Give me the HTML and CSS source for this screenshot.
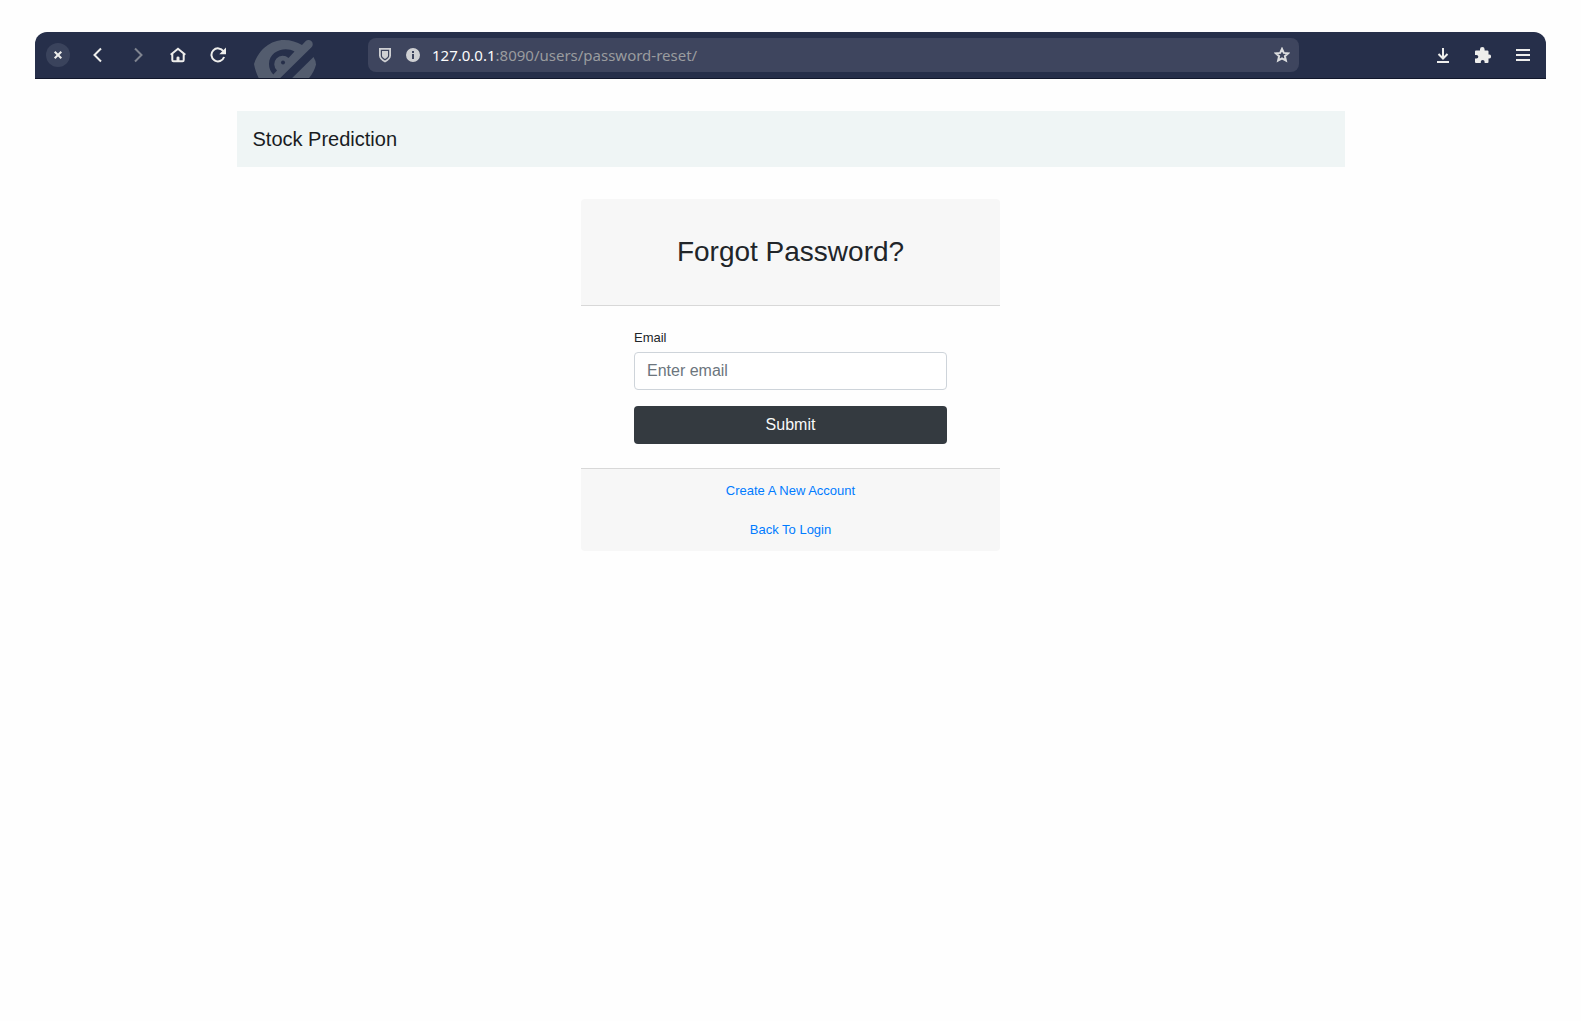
FILE: index.html
```html
<!DOCTYPE html>
<html lang="en">
<head>
<meta charset="utf-8">
<meta name="viewport" content="width=device-width, initial-scale=1">
<title>Forgot Password</title>
<link rel="stylesheet" href="styles.css">
</head>
<body>
<header class="toolbar">
  <div class="tools">
    <button class="tool" type="button" aria-label="Close"><svg class="close" width="24" height="24" viewBox="0 0 24 24"><path d="M8.7 8.7l6.6 6.6M15.3 8.7l-6.6 6.6"/></svg></button>
    <button class="tool" type="button" aria-label="Back"><svg width="16" height="16" viewBox="0 0 16 16"><path d="M11 1.5L4.5 8l6.500 6.500"/></svg></button>
    <button class="tool" type="button" aria-label="Forward" disabled><svg width="16" height="16" viewBox="0 0 16 16"><path d="M5 1.500L11.500 8 5 14.500"/></svg></button>
    <button class="tool" type="button" aria-label="Home"><svg width="16" height="16" viewBox="0 0 16 16"><path d="M.7 7.700L8 1.700l7.300 6M2.300 7v6q0 1.200 1.200 1.200h9q1.200 0 1.200-1.200V7"/><path class="fill" d="M6.500 14v-3.200q0-1.300 1.500-1.300t1.500 1.300V14z"/></svg></button>
    <button class="tool" type="button" aria-label="Reload"><svg width="16" height="16" viewBox="0 0 16 16"><path d="M13.400 4.300A6.500 6.500 0 1 0 14.100 10"/><path class="fill" d="M16 .5v6.700H9.300z"/></svg></button>
  </div>
  <div class="emblem">
    <svg width="63" height="54" viewBox="0 0 63 54" aria-hidden="true">
      <path class="shade" fill-rule="evenodd" d="M0 24C5 9 17 0 30 0c7 0 13 2 18 5l3.500-3.700a4.200 4.200 0 0 1 6 6L14 50C7 44 2 35 0 24zM40.500 11.500C31 6 15 11 15 24c0 4 1.500 8 4.300 10.500l3.700-4A7.500 7.500 0 1 1 34.500 18z"/>
      <path class="shade" d="M59.500 17q2.500 4 2.500 7.500C58 40 44 51 24 52z"/>
      <circle class="pupil" cx="29" cy="22.500" r="2"/>
    </svg>
  </div>
  <div class="address">
    <svg width="14" height="16" viewBox="0 0 14 16" aria-hidden="true"><path class="solid" fill-rule="evenodd" d="M1 1h12v7.500c0 3-2.300 5-6 6.900C3.300 13.500 1 11.500 1 8.500zm1.800 1.800v5.700c0 2 1.300 3.300 4.200 4.900 2.900-1.600 4.200-2.900 4.200-4.900V2.800zM4 4h6v4.500c0 1.300-.9 2.200-3 3.500-2.100-1.300-3-2.200-3-3.500z"/></svg>
    <svg width="14" height="14" viewBox="0 0 14 14" aria-hidden="true"><path class="solid" fill-rule="evenodd" d="M7 0a7 7 0 1 1 0 14A7 7 0 0 1 7 0zM6 3v2h2V3zM6 6v5h2V6z"/></svg>
    <span class="url"><span class="host">127.0.0.1</span>:8090/users/password-reset/</span>
    <button class="star" type="button" aria-label="Bookmark this page"><svg width="16" height="16" viewBox="0 0 16 16"><path d="M8 1.900l1.800 4 4.400.4-3.300 2.900 1 4.300L8 11.300l-3.900 2.200 1-4.300-3.300-2.900 4.400-.4z"/></svg></button>
  </div>
  <div class="tools">
    <button class="tool" type="button" aria-label="Downloads"><svg width="16" height="16" viewBox="0 0 16 16"><path d="M8 1v10M3.500 7L8 11.500 12.500 7M2 15h12"/></svg></button>
    <button class="tool" type="button" aria-label="Extensions"><svg width="16" height="16" viewBox="0 0 16 16"><path class="fill" d="M5 2.300a2.300 2.300 0 0 1 4.600 0V3.500h2.900q1 0 1 1V7.500h.6a2 2 0 0 1 0 4h-.6v3.500q0 1-1 1H9.600v-1.200a1.900 1.900 0 0 0-3.800 0V16H1q-1 0-1-1v-3.400h1.500a1.800 1.800 0 0 0 0-3.600H0V4.500q0-1 1-1h4z"/></svg></button>
    <button class="tool" type="button" aria-label="Menu"><svg width="16" height="16" viewBox="0 0 16 16"><path d="M1 3h14M1 8h14M1 13h14"/></svg></button>
  </div>
</header>
<div class="page">
  <nav class="navbar"><a class="brand" href="#">Stock Prediction</a></nav>
  <main class="card">
    <div class="card-header"><h1 class="title">Forgot Password?</h1></div>
    <form class="card-body">
      <label class="label" for="email">Email</label>
      <input class="field" id="email" type="email" placeholder="Enter email">
      <button class="submit" type="button">Submit</button>
    </form>
    <div class="card-footer">
      <a class="link" href="#">Create A New Account</a>
      <a class="link" href="#">Back To Login</a>
    </div>
  </main>
</div>
</body>
</html>
```
FILE: styles.css
```css
*, *::before, *::after { box-sizing: border-box; }
body {
  margin: 0;
  padding: 32px 35px;
  background: #fefefe;
  color: #212529;
  font-family: "Liberation Sans", Arial, sans-serif;
  font-size: 16px;
  line-height: 24px;
}
button { font: inherit; cursor: pointer; }

/* Browser toolbar */
.toolbar {
  display: flex;
  align-items: center;
  height: 47px;
  padding: 0 3px;
  overflow: hidden;
  background: #262f4a;
  border-bottom: 1px solid #11172b;
  border-radius: 12px 12px 0 0;
}
.tools { display: flex; }
.tool, .star {
  display: flex;
  align-items: center;
  justify-content: center;
  padding: 0;
  border: 0;
  background: none;
  color: #eeeeec;
}
.tool { width: 40px; height: 40px; }
.tool:disabled { color: #7f8490; }
.toolbar svg {
  display: block;
  flex: none;
  fill: none;
  stroke: currentColor;
  stroke-width: 2;
}
.toolbar .close { background: #3a435c; border-radius: 50%; }
.toolbar .fill, .toolbar .solid { fill: currentColor; stroke: none; }
.emblem {
  width: 130px;
  height: 30px;
  padding-left: 16px;
}
.toolbar .shade { fill: #535c6e; stroke: none; }
.toolbar .pupil { fill: #262f4a; stroke: none; }
.address {
  display: flex;
  flex: 1;
  align-items: center;
  gap: 14px;
  height: 34px;
  margin-right: 124px;
  padding: 0 9px 0 10px;
  border-radius: 8px;
  background: #3e455e;
  color: #cfd0d3;
}
.url {
  flex: 1;
  margin-left: -2px;
  color: #9a9c9f;
  font-family: "Noto Sans", sans-serif;
  font-size: 15px;
}
.host { color: #fcfcfc; }
.star { color: #dcdddf; }

/* Page content */
.page {
  max-width: 1108px;
  margin: 32px auto 0;
}
.navbar {
  padding: 16px;
  background: #eff5f5;
}
.brand {
  display: block;
  color: #191c1f;
  font-size: 20px;
  text-decoration: none;
}
.card {
  max-width: 419px;
  margin: 32px auto 0;
  overflow: hidden;
  border-radius: 4px;
}
.card-header {
  padding: 36px 12px;
  border-bottom: 1px solid #d8d8d8;
  background: #f7f7f7;
}
.title {
  margin: 0;
  font-size: 28px;
  font-weight: 400;
  line-height: 34px;
  text-align: center;
}
.card-body {
  display: flex;
  flex-direction: column;
  padding: 20px 53px 24px;
}
.label {
  margin-bottom: 2px;
  font-size: 13px;
}
.field {
  height: 38px;
  padding: 0 12px;
  border: 1px solid #ced4da;
  border-radius: 4px;
  background: #fff;
  color: #495057;
  font: inherit;
}
.field::placeholder { color: #6c757d; opacity: 1; }
.submit {
  height: 38px;
  margin-top: 16px;
  border: 0;
  border-radius: 4px;
  background: #343a40;
  color: #f8f9fa;
}
.card-footer {
  display: flex;
  flex-direction: column;
  align-items: center;
  gap: 20px;
  padding: 12px;
  border-top: 1px solid #d8d8d8;
  background: #f7f7f7;
}
.link {
  color: #007bff;
  font-size: 13px;
  line-height: 19px;
  text-decoration: none;
}
```
